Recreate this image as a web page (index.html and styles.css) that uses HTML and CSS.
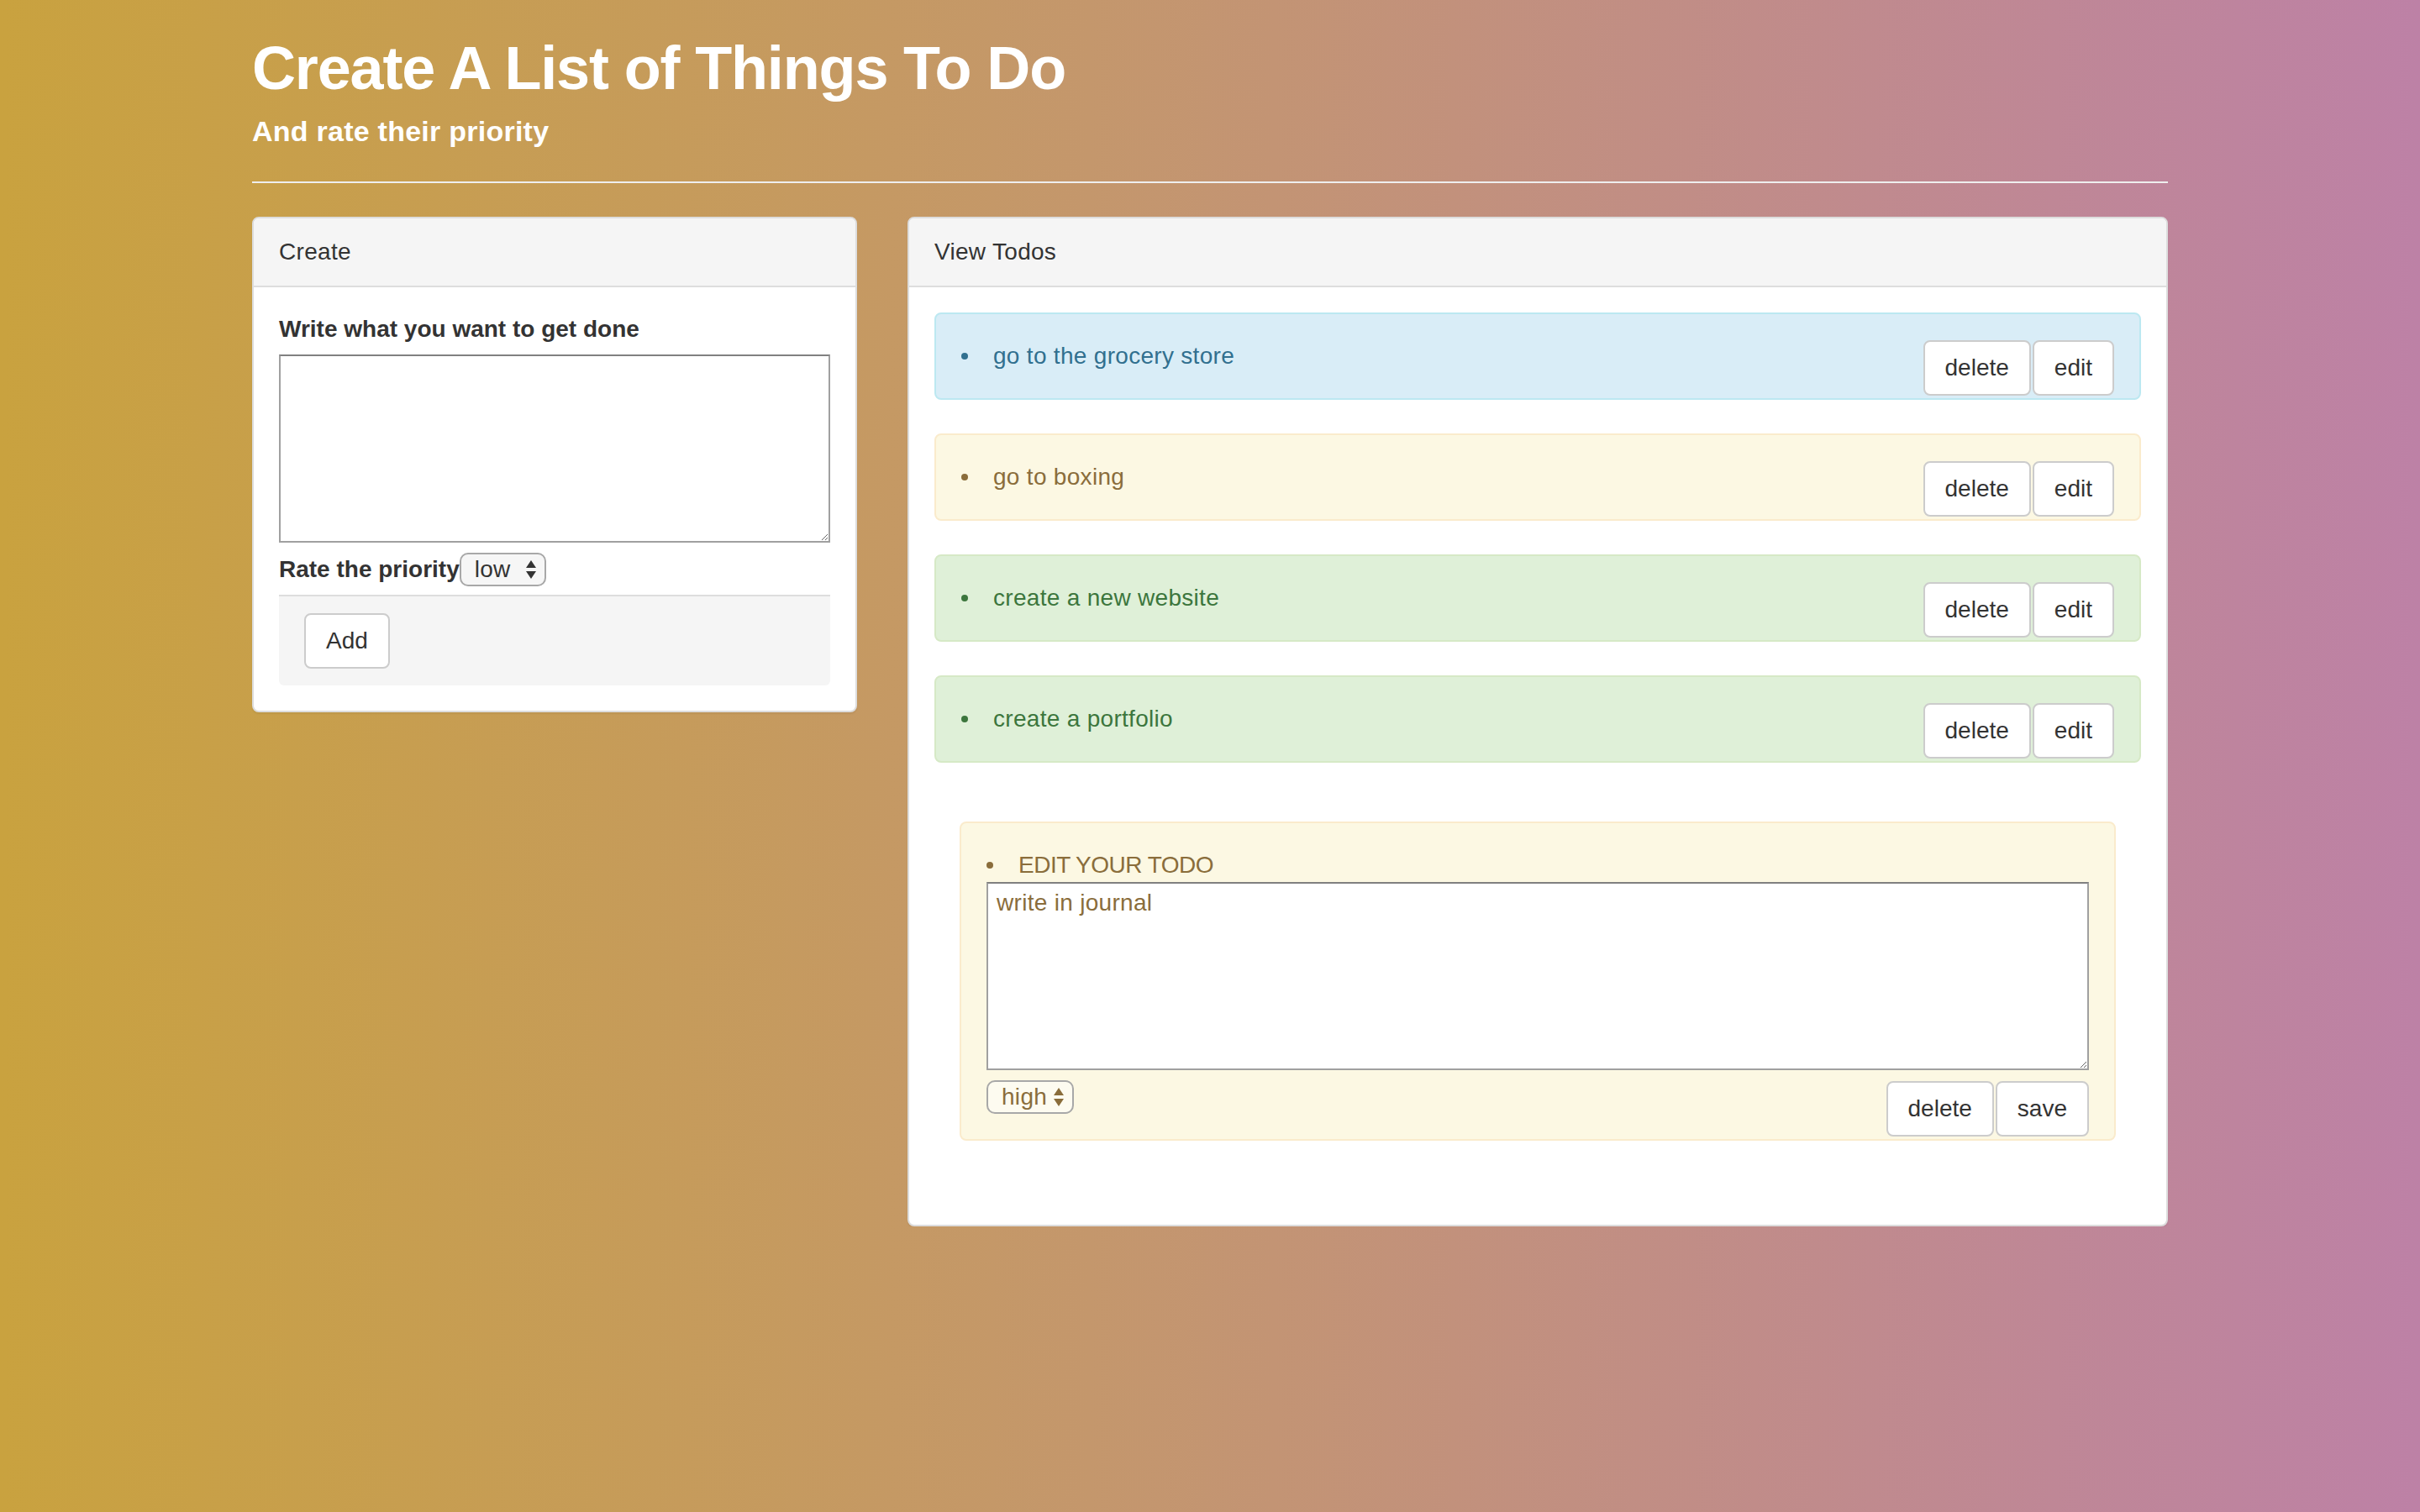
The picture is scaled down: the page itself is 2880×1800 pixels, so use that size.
FILE: index.html
```html
<!DOCTYPE html>
<html lang="en">
<head>
<meta charset="utf-8">
<title>Create A List of Things To Do</title>
<link rel="stylesheet" href="styles.css">
</head>
<body>
<div class="container">
  <header class="page-header">
    <h1 class="title">Create A List of Things To Do</h1>
    <h4 class="subtitle">And rate their priority</h4>
  </header>
  <hr class="divider">
  <div class="row">
    <section class="panel panel-create">
      <div class="panel-heading">Create</div>
      <div class="panel-body">
        <label class="field-label">Write what you want to get done</label>
        <textarea class="text-input"></textarea>
        <div class="priority-row">
          <label class="field-label">Rate the priority</label>
          <span class="select-wrap">
            <select class="select"><option>low</option><option>medium</option><option>high</option></select>
            <svg class="select-arrows" viewBox="0 0 12 22" width="12" height="22"><path d="M6 0 L12 9 H0 Z M0 13 H12 L6 22 Z" fill="currentColor"/></svg>
          </span>
        </div>
        <div class="panel-footer">
          <button class="btn">Add</button>
        </div>
      </div>
    </section>

    <section class="panel panel-view">
      <div class="panel-heading">View Todos</div>
      <div class="panel-body">
        <div class="alert alert-info">
          <ul class="todo-list">
            <li class="todo-item"><span class="todo-text">go to the grocery store</span>
              <div class="btn-pair"><button class="btn">delete</button><button class="btn">edit</button></div>
            </li>
          </ul>
        </div>
        <div class="alert alert-warning">
          <ul class="todo-list">
            <li class="todo-item"><span class="todo-text">go to boxing</span>
              <div class="btn-pair"><button class="btn">delete</button><button class="btn">edit</button></div>
            </li>
          </ul>
        </div>
        <div class="alert alert-success">
          <ul class="todo-list">
            <li class="todo-item"><span class="todo-text">create a new website</span>
              <div class="btn-pair"><button class="btn">delete</button><button class="btn">edit</button></div>
            </li>
          </ul>
        </div>
        <div class="alert alert-success">
          <ul class="todo-list">
            <li class="todo-item"><span class="todo-text">create a portfolio</span>
              <div class="btn-pair"><button class="btn">delete</button><button class="btn">edit</button></div>
            </li>
          </ul>
        </div>

        <div class="edit-wrap">
          <div class="alert alert-warning">
            <ul class="todo-list">
              <li class="todo-item"><span class="todo-text todo-caps">EDIT YOUR TODO</span></li>
            </ul>
            <textarea class="text-input edit-input">write in journal</textarea>
            <div class="edit-row">
              <span class="select-wrap select-wrap-tinted">
                <select class="select"><option>low</option><option>medium</option><option selected>high</option></select>
                <svg class="select-arrows" viewBox="0 0 12 22" width="12" height="22"><path d="M6 0 L12 9 H0 Z M0 13 H12 L6 22 Z" fill="currentColor"/></svg>
              </span>
              <div class="btn-pair"><button class="btn">delete</button><button class="btn">save</button></div>
            </div>
          </div>
        </div>
      </div>
    </section>
  </div>
</div>
</body>
</html>
```

FILE: styles.css
```css
html {
  min-height: 100%;
  background: linear-gradient(to right, #c9a23f 0%, #c4976c 45%, #bd81a6 100%);
}

body {
  margin: 0;
  font-family: "Liberation Sans", Arial, sans-serif;
  font-size: 28px;
  line-height: 40px;
  color: #333;
  letter-spacing: 0.3px;
}

.container {
  width: 2280px;
  margin: 0 auto;
  padding: 0 30px;
}

/* ---------- header ---------- */
.page-header {
  color: #fff;
}

.title {
  margin: 42px 0 0;
  font-size: 72px;
  line-height: 79px;
  font-weight: bold;
  letter-spacing: -1.15px;
}

.subtitle {
  margin: 17px 0 0;
  font-size: 34px;
  line-height: 37px;
  font-weight: bold;
  letter-spacing: 0.25px;
}

.divider {
  margin: 41px 0 40px;
  border: 0;
  border-top: 2px solid #eee;
  height: 0;
}

/* ---------- layout ---------- */
.row {
  display: grid;
  grid-template-columns: 720px 1500px;
  column-gap: 60px;
  align-items: start;
}

/* ---------- panels ---------- */
.panel {
  background: #fff;
  border: 2px solid #ddd;
  border-radius: 8px;
  box-shadow: 0 2px 2px rgba(0, 0, 0, 0.05);
}

.panel-heading {
  padding: 20px 30px;
  background: #f5f5f5;
  border-bottom: 2px solid #ddd;
  border-radius: 6px 6px 0 0;
}

.panel-body {
  padding: 30px;
}

.field-label {
  display: block;
  font-weight: bold;
  letter-spacing: 0;
  margin-bottom: 10px;
}

.priority-row .field-label {
  margin-bottom: 0;
}

.text-input {
  display: block;
  box-sizing: border-box;
  width: 100%;
  height: 224px;
  margin: 0 0 12px;
  padding: 3px 10px;
  font-family: inherit;
  font-size: 28px;
  line-height: 40px;
  letter-spacing: 0.3px;
  color: inherit;
  background: #fff;
  border: 2px solid #a0a0a0;
  border-top-color: #808080;
  border-radius: 0;
  outline: none;
}

.edit-input {
  margin-bottom: 12px;
}

.priority-row {
  display: flex;
  align-items: center;
  height: 40px;
  margin-bottom: 10px;
}

/* select look-alike (native select inside a rounded box) */
.select-wrap {
  display: inline-flex;
  align-items: center;
  box-sizing: border-box;
  width: 103px;
  height: 40px;
  border: 2px solid #a8a8a8;
  border-radius: 10px;
  background: #f6f6f6;
  color: #333;
}

.select-wrap-tinted {
  width: 104px;
  background: rgba(255, 255, 255, 0.45);
  color: #8a6d3b;
}

.select {
  -webkit-appearance: none;
  appearance: none;
  flex: 1;
  min-width: 0;
  height: 36px;
  margin: 0;
  padding: 0 0 0 16px;
  border: 0;
  background: transparent;
  font-family: inherit;
  font-size: 28px;
  line-height: 36px;
  letter-spacing: 0.3px;
  color: inherit;
  outline: none;
}

.select-arrows {
  flex: none;
  margin-right: 10px;
}

.panel-footer {
  padding: 20px 30px;
  background: #f5f5f5;
  border-top: 2px solid #ddd;
  border-radius: 0 0 6px 6px;
}

/* ---------- buttons ---------- */
.btn {
  display: inline-block;
  margin: 0;
  padding: 11px 24px;
  font-family: inherit;
  font-size: 28px;
  line-height: 40px;
  letter-spacing: 0;
  color: #333;
  background: #fff;
  border: 2px solid #ccc;
  border-radius: 8px;
  cursor: pointer;
}

.btn-pair {
  display: flex;
  gap: 2px;
  margin-left: auto;
  align-self: flex-start;
  margin-top: 1px;
}

/* ---------- alerts / todos ---------- */
.alert {
  padding: 30px;
  margin-bottom: 40px;
  border: 2px solid transparent;
  border-radius: 8px;
}

.alert-info {
  background: #d9edf7;
  border-color: #bce8f1;
  color: #31708f;
}

.alert-warning {
  background: #fcf8e3;
  border-color: #faebcc;
  color: #8a6d3b;
}

.alert-success {
  background: #dff0d8;
  border-color: #d6e9c6;
  color: #3c763d;
}

.todo-list {
  margin: 0;
  padding: 0;
  list-style: none;
}

.todo-item {
  display: flex;
  align-items: flex-start;
  height: 40px;
}

.todo-item::before {
  content: "";
  flex: none;
  width: 8px;
  height: 8px;
  margin: 0 30px 0 0;
  align-self: center;
  border-radius: 50%;
  background: currentColor;
}

.todo-text {
  white-space: nowrap;
}

.todo-caps {
  letter-spacing: -0.5px;
}

.edit-wrap {
  padding: 30px;
}

.edit-row {
  display: flex;
  align-items: flex-start;
  justify-content: space-between;
  height: 40px;
}

.edit-row .btn-pair {
  margin-top: 1px;
}
```
